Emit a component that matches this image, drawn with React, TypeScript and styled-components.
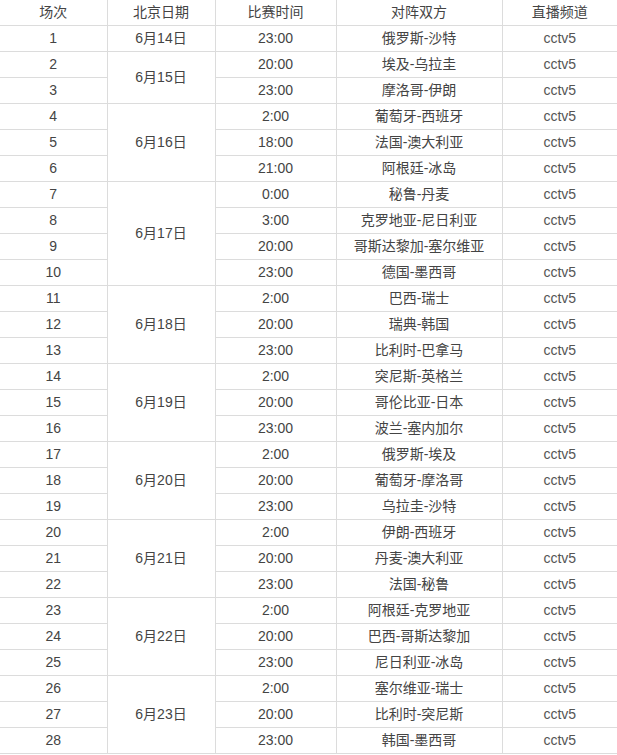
import React from 'react';
import { createGlobalStyle, styled } from 'styled-components';

type Match = { time: string; teams: string };
type Day = { date: string; matches: Match[] };

const schedule: Day[] = [
  { date: '6月14日', matches: [{ time: '23:00', teams: '俄罗斯-沙特' }] },
  {
    date: '6月15日',
    matches: [
      { time: '20:00', teams: '埃及-乌拉圭' },
      { time: '23:00', teams: '摩洛哥-伊朗' },
    ],
  },
  {
    date: '6月16日',
    matches: [
      { time: '2:00', teams: '葡萄牙-西班牙' },
      { time: '18:00', teams: '法国-澳大利亚' },
      { time: '21:00', teams: '阿根廷-冰岛' },
    ],
  },
  {
    date: '6月17日',
    matches: [
      { time: '0:00', teams: '秘鲁-丹麦' },
      { time: '3:00', teams: '克罗地亚-尼日利亚' },
      { time: '20:00', teams: '哥斯达黎加-塞尔维亚' },
      { time: '23:00', teams: '德国-墨西哥' },
    ],
  },
  {
    date: '6月18日',
    matches: [
      { time: '2:00', teams: '巴西-瑞士' },
      { time: '20:00', teams: '瑞典-韩国' },
      { time: '23:00', teams: '比利时-巴拿马' },
    ],
  },
  {
    date: '6月19日',
    matches: [
      { time: '2:00', teams: '突尼斯-英格兰' },
      { time: '20:00', teams: '哥伦比亚-日本' },
      { time: '23:00', teams: '波兰-塞内加尔' },
    ],
  },
  {
    date: '6月20日',
    matches: [
      { time: '2:00', teams: '俄罗斯-埃及' },
      { time: '20:00', teams: '葡萄牙-摩洛哥' },
      { time: '23:00', teams: '乌拉圭-沙特' },
    ],
  },
  {
    date: '6月21日',
    matches: [
      { time: '2:00', teams: '伊朗-西班牙' },
      { time: '20:00', teams: '丹麦-澳大利亚' },
      { time: '23:00', teams: '法国-秘鲁' },
    ],
  },
  {
    date: '6月22日',
    matches: [
      { time: '2:00', teams: '阿根廷-克罗地亚' },
      { time: '20:00', teams: '巴西-哥斯达黎加' },
      { time: '23:00', teams: '尼日利亚-冰岛' },
    ],
  },
  {
    date: '6月23日',
    matches: [
      { time: '2:00', teams: '塞尔维亚-瑞士' },
      { time: '20:00', teams: '比利时-突尼斯' },
      { time: '23:00', teams: '韩国-墨西哥' },
    ],
  },
];

const columns = [107, 108, 121, 166, 115];
const headers = ['场次', '北京日期', '比赛时间', '对阵双方', '直播频道'];

const App = () => {
  let no = 0;

  return (
    <>
      <GlobalStyle />
      <Table>
        <colgroup>
          {columns.map((w, i) => (
            <col key={i} style={{ width: w }} />
          ))}
        </colgroup>
        <thead>
          <tr>
            {headers.map(h => (
              <HeadCell key={h}>{h}</HeadCell>
            ))}
          </tr>
        </thead>
        <tbody>
          {schedule.map(day =>
            day.matches.map((m, i) => {
              no += 1;
              return (
                <tr key={no}>
                  <Cell $first>{no}</Cell>
                  {i === 0 && <Cell rowSpan={day.matches.length}>{day.date}</Cell>}
                  <Cell>{m.time}</Cell>
                  <Cell>{m.teams}</Cell>
                  <Cell $muted>cctv5</Cell>
                </tr>
              );
            })
          )}
        </tbody>
      </Table>
    </>
  );
};
export default App;

const GlobalStyle = createGlobalStyle`
  html, body {
    margin: 0;
    padding: 0;
    background: #fff;
  }
  body {
    font-family: "Liberation Sans", "Noto Sans CJK SC", sans-serif;
    font-size: 14px;
    color: #444;
  }
`;

const Table = styled.table`
  width: 617px;
  table-layout: fixed;
  border-collapse: collapse;
  border-spacing: 0;
`;

const HeadCell = styled.th`
  height: 24px;
  padding: 0 0 1px;
  font-weight: normal;
  text-align: center;
  line-height: 22px;
  border-bottom: 1px solid #dcdcdc;
  border-left: 1px solid #dcdcdc;
  &:first-child {
    border-left: none;
  }
`;

const Cell = styled.td<{ $first?: boolean; $muted?: boolean }>`
  height: 23px;
  padding: 0 0 2px;
  text-align: center;
  vertical-align: middle;
  line-height: 22px;
  color: ${p => (p.$muted ? '#555' : '#444')};
  border-bottom: 1px solid #dcdcdc;
  border-left: ${p => (p.$first ? 'none' : '1px solid #dcdcdc')};
`;
